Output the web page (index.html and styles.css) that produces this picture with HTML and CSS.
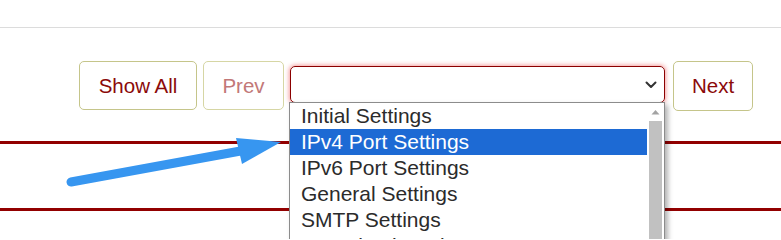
FILE: index.html
```html
<!DOCTYPE html>
<html>
<head>
<meta charset="utf-8">
<link rel="stylesheet" href="styles.css">
</head>
<body>
<div class="topbar"></div>
<div class="toolbar">
  <button class="btn btn-show">Show All</button>
  <button class="btn btn-prev">Prev</button>
  <div class="select">
    <svg class="chevron" width="12" height="8" viewBox="0 0 12 8"><path d="M1.5 1.5 L6 6 L10.5 1.5" fill="none" stroke="#333" stroke-width="2" stroke-linecap="round" stroke-linejoin="round"/></svg>
  </div>
  <button class="btn btn-next">Next</button>
</div>
<div class="rule"></div>
<div class="band"></div>
<div class="rule"></div>

<div class="dropdown">
  <ul class="options">
    <li>Initial Settings</li>
    <li class="active">IPv4 Port Settings</li>
    <li>IPv6 Port Settings</li>
    <li>General Settings</li>
    <li>SMTP Settings</li>
    <li>Port Fixed Settings</li>
  </ul>
  <div class="scrollbar">
    <svg class="scroll-up" width="9" height="6" viewBox="0 0 9 6"><path d="M0.5 5.5 L4.5 1 L8.5 5.5 Z" fill="#a3a3a3"/></svg>
    <div class="thumb"></div>
  </div>
</div>

<svg class="arrow" width="300" height="200" viewBox="0 0 300 200">
  <line x1="71" y1="182" x2="246" y2="150" stroke="#3796f0" stroke-width="9" stroke-linecap="round"/>
  <polygon points="236,138 281,142 242,164" fill="#3796f0"/>
</svg>
</body>
</html>
```

FILE: styles.css
```css
html, body {
  margin: 0;
  padding: 0;
  background: #fff;
}
body {
  font-family: "Liberation Sans", Arial, sans-serif;
  width: 781px;
  height: 239px;
  overflow: hidden;
  position: relative;
}
.topbar {
  height: 27px;
  border-bottom: 1px solid #dcdcdc;
}
.toolbar {
  display: flex;
  align-items: center;
  justify-content: flex-end;
  margin-top: 33px;
  padding-right: 28px;
  height: 49px;
}
.btn {
  box-sizing: border-box;
  height: 49px;
  background: #fff;
  border: 1px solid #c5c58a;
  border-radius: 5px;
  font-family: "Liberation Sans", Arial, sans-serif;
  font-size: 20.5px;
  color: #8b0a0a;
  padding: 0;
  margin: 0;
}
.btn-show {
  width: 118px;
}
.btn-prev {
  width: 81px;
  margin-left: 6px;
  color: #c27878;
  border-color: #d6d6a4;
}
.select {
  box-sizing: border-box;
  width: 375px;
  height: 37px;
  margin-left: 6px;
  border: 1px solid #8b0000;
  border-radius: 5px;
  box-shadow: 0 0 4px 1px rgba(230, 40, 40, 0.45);
  display: flex;
  align-items: center;
  justify-content: flex-end;
  padding-right: 7px;
  position: relative;
  top: -1px;
}
.chevron {
  display: block;
}
.btn-next {
  width: 80px;
  margin-left: 8px;
  height: 50px;
}
.rule {
  height: 3px;
  background: #920000;
}
.toolbar + .rule {
  margin-top: 31px;
}
.band {
  height: 64px;
}
.dropdown {
  position: absolute;
  left: 289px;
  top: 102px;
  width: 376px;
  height: 160px;
  box-sizing: border-box;
  border: 1px solid #8c8c8c;
  background: #fff;
  box-shadow: 3px 3px 5px rgba(0, 0, 0, 0.3);
  display: flex;
}
.options {
  list-style: none;
  margin: 0;
  padding: 0;
  flex: 1;
  font-size: 21px;
  color: #2b2b2b;
}
.options li {
  height: 26px;
  line-height: 26px;
  padding-left: 11px;
  white-space: nowrap;
}
.options li.active {
  background: #1d6ad4;
  color: #fff;
}
.scrollbar {
  width: 17px;
  display: flex;
  flex-direction: column;
  align-items: center;
  background: #fff;
}
.scroll-up {
  margin-top: 6px;
  display: block;
}
.thumb {
  margin-top: 6px;
  width: 13px;
  flex: 1;
  background: #c1c1c1;
}
.arrow {
  position: absolute;
  left: 0;
  top: 0;
}
```
